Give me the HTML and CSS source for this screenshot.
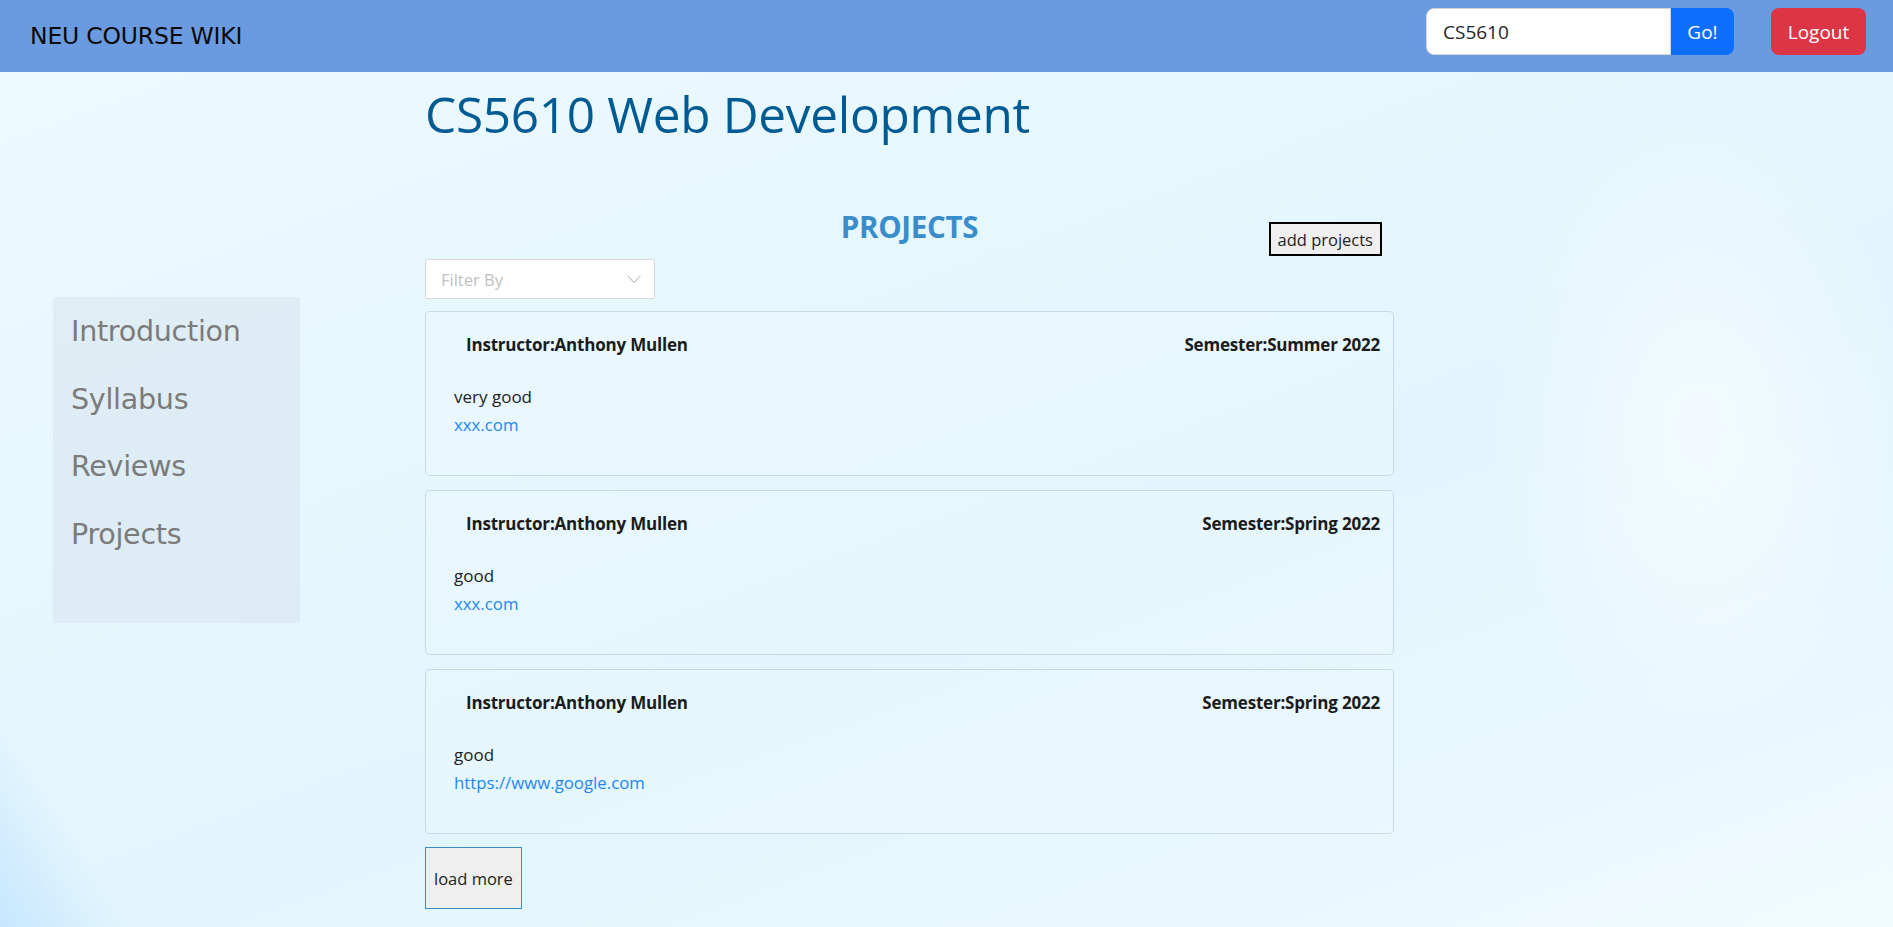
FILE: index.html
```
<!DOCTYPE html>
<html lang="en">
<head>
<meta charset="utf-8">
<title>NEU Course Wiki - CS5610</title>
<link rel="stylesheet" href="styles.css">
</head>
<body>
<nav class="navbar">
  <a class="brand" href="#">NEU COURSE WIKI</a>
  <div class="nav-right">
    <form class="search">
      <input class="search-input" type="text" value="CS5610">
      <button class="btn btn-go" type="button">Go!</button>
    </form>
    <button class="btn btn-logout" type="button">Logout</button>
  </div>
</nav>
<div class="page">
  <aside class="sidebar">
    <a class="side-link" href="#">Introduction</a>
    <a class="side-link" href="#">Syllabus</a>
    <a class="side-link" href="#">Reviews</a>
    <a class="side-link" href="#">Projects</a>
  </aside>
  <main class="main">
    <h1 class="title">CS5610 Web Development</h1>
    <div class="section-head">
      <span></span>
      <h2 class="section-title">PROJECTS</h2>
      <button class="add-btn" type="button">add projects</button>
    </div>
    <div class="filter">
      <span class="filter-text">Filter By</span>
      <svg class="chev" width="14" height="8" viewBox="0 0 14 8"><path d="M0.5 0.5 L7 7.5 L13.5 0.5" fill="none" stroke="#bfbfbf" stroke-width="1.1"/></svg>
    </div>
    <div class="cards">
      <div class="card">
        <div class="card-head"><span>Instructor:Anthony Mullen</span><span>Semester:Summer 2022</span></div>
        <p class="desc">very good</p>
        <a class="link" href="#">xxx.com</a>
      </div>
      <div class="card">
        <div class="card-head"><span>Instructor:Anthony Mullen</span><span>Semester:Spring 2022</span></div>
        <p class="desc">good</p>
        <a class="link" href="#">xxx.com</a>
      </div>
      <div class="card">
        <div class="card-head"><span>Instructor:Anthony Mullen</span><span>Semester:Spring 2022</span></div>
        <p class="desc">good</p>
        <a class="link" href="#">https://www.google.com</a>
      </div>
    </div>
    <button class="more-btn" type="button">load more</button>
  </main>
</div>
</body>
</html>
```
FILE: styles.css
```
* { box-sizing: border-box; }
html, body { margin: 0; height: 100%; }
body {
  font-family: "Open Sans", "Noto Sans", sans-serif;
  color: #212529;
  overflow: hidden;
  background:
    radial-gradient(ellipse 300px 460px at 1700px 430px, rgba(255,255,255,0.6), rgba(255,255,255,0) 70%),
    linear-gradient(58deg, rgba(195,228,255,0.85) 0px, rgba(195,228,255,0.5) 50px, rgba(195,228,255,0) 110px),
    linear-gradient(160deg, #eefaff 0%, #e7f7fe 30%, #e2f5fd 60%, #e9f8fe 85%, #f2fbff 100%);
}
.navbar {
  height: 72px;
  background: #6a9ae0;
  display: flex;
  align-items: center;
  justify-content: space-between;
  padding: 0 27px 0 30px;
}
.brand {
  font-family: "DejaVu Sans", sans-serif;
  font-size: 23.5px;
  color: #0a0a0a;
  text-decoration: none;
  letter-spacing: -0.2px;
}
.nav-right { display: flex; align-items: center; gap: 37px; align-self: flex-start; margin-top: 8px; }
.search { display: flex; margin: 0; }
.search-input {
  width: 245px;
  height: 47px;
  border: 1px solid #ced4da;
  border-radius: 8px 0 0 8px;
  padding: 0 16px;
  font-family: "Open Sans", sans-serif;
  font-size: 19px;
  color: #212529;
  background: #fff;
  outline: none;
}
.btn {
  height: 47px;
  border: none;
  color: #fff;
  font-family: "Open Sans", sans-serif;
  font-size: 19px;
  padding: 0 14px;
  cursor: pointer;
}
.btn-go { background: #0d6efd; border-radius: 0 8px 8px 0; width: 63px; }
.btn-logout { background: #dc3545; border-radius: 8px; width: 95px; }

.page { display: flex; padding-left: 53px; }
.sidebar {
  width: 247px;
  height: 326px;
  margin-top: 225px;
  background: rgba(215, 228, 236, 0.55);
  padding: 1px 16px;
  display: flex;
  flex-direction: column;
}
.side-link {
  font-family: "DejaVu Sans", sans-serif;
  font-size: 28.6px;
  color: #7b7b7b;
  text-decoration: none;
  line-height: 67.5px;
  height: 67.5px;
  margin-left: 2px;
  letter-spacing: -0.3px;
}
.main { width: 969px; margin-left: 125px; }
.title {
  margin: 12px 0 0;
  font-size: 49.5px;
  font-weight: 400;
  line-height: 60px;
  color: #005b93;
  letter-spacing: -0.3px;
}
.section-head {
  display: grid;
  grid-template-columns: 1fr auto 1fr;
  align-items: start;
  margin-top: 66px;
}
.section-title {
  margin: 0;
  font-size: 29.5px;
  line-height: 34px;
  font-weight: 700;
  color: #3a8dcb;
  letter-spacing: -0.3px;
}
.add-btn {
  justify-self: end;
  margin: 12px 12px 0 0;
  height: 34px;
  padding: 0 7px;
  border: 2px solid #000;
  background: #efefef;
  font-family: "Open Sans", sans-serif;
  font-size: 16.5px;
  color: #222;
}
.filter {
  margin-top: 3px;
  width: 230px;
  height: 40px;
  background: #fff;
  border: 1px solid #d9d9d9;
  border-radius: 2px;
  display: flex;
  align-items: center;
  justify-content: space-between;
  padding: 0 13px 0 15px;
}
.filter-text { font-size: 16.5px; color: #bfbfbf; }
.cards { display: flex; flex-direction: column; gap: 14px; margin-top: 12px; }
.card {
  height: 165px;
  border: 1px solid rgba(0, 40, 70, 0.14);
  border-radius: 5px;
  background: rgba(255, 255, 255, 0.12);
  padding: 21px 13px 0 28px;
}
.card-head {
  display: flex;
  justify-content: space-between;
  padding-left: 12px;
  font-size: 17px;
  font-weight: 700;
  line-height: 24px;
  color: #1b1b1b;
  letter-spacing: -0.2px;
}
.desc {
  margin: 26px 0 0;
  font-size: 17px;
  line-height: 28px;
  color: #222;
}
.link {
  display: block;
  font-size: 16.8px;
  line-height: 28px;
  color: #1e88f0;
  text-decoration: none;
}
.more-btn {
  margin-top: 13px;
  height: 62px;
  padding: 0 8px;
  border: 1px solid #3a8dcb;
  background: #efefef;
  font-family: "Open Sans", sans-serif;
  font-size: 16.5px;
  color: #222;
}
```
